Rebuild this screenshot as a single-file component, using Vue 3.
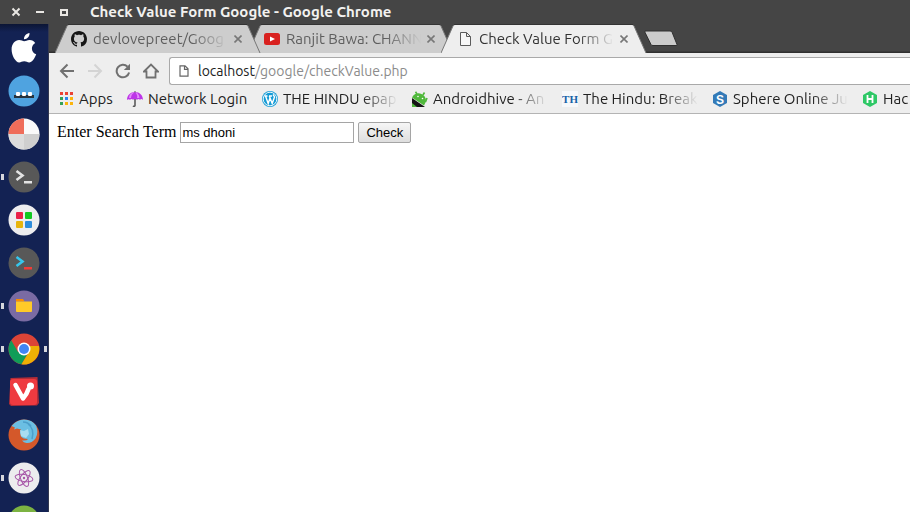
<script setup>
import { ref } from 'vue'

const term = ref('ms dhoni')

const tabs = [
  { id: 'github', title: 'devlovepreet/Goog', active: false },
  { id: 'youtube', title: 'Ranjit Bawa: CHANN', active: false },
  { id: 'document', title: 'Check Value Form G', active: true },
]

const bookmarks = [
  { id: 'apps', title: 'Apps', size: 'short' },
  { id: 'umbrella', title: 'Network Login', size: 'medium' },
  { id: 'wordpress', title: 'THE HINDU epap', size: 'full' },
  { id: 'android', title: 'Androidhive - An', size: 'full' },
  { id: 'hindu', title: 'The Hindu: Break', size: 'full' },
  { id: 'sphere', title: 'Sphere Online Ju', size: 'full' },
  { id: 'hacker', title: 'Hac', size: 'full' },
]

const dock = [
  { id: 'apple', label: 'Launcher' },
  { id: 'dots', label: 'Dock settings' },
  { id: 'pie', label: 'Workspaces' },
  { id: 'terminal', label: 'Terminal', running: true },
  { id: 'squares', label: 'Software' },
  { id: 'terminator', label: 'Terminator' },
  { id: 'files', label: 'Files', running: true },
  { id: 'chrome', label: 'Chrome', running: true, focused: true },
  { id: 'vivaldi', label: 'Vivaldi' },
  { id: 'firefox', label: 'Firefox' },
  { id: 'atom', label: 'Atom', running: true },
  { id: 'green', label: 'Android Studio' },
]
</script>

<template>
  <div class="desktop">
    <header class="titlebar">
      <div class="window-buttons">
        <button type="button" aria-label="Close window">
          <svg width="10" height="10" viewBox="0 0 10 10"><path d="M1.5 1.500l7 7M8.500 1.500l-7 7" stroke="#e9e7e3" stroke-width="2" /></svg>
        </button>
        <button type="button" aria-label="Minimize window">
          <svg width="10" height="10" viewBox="0 0 10 10"><path d="M1 5h8" stroke="#e9e7e3" stroke-width="2" /></svg>
        </button>
        <button type="button" aria-label="Maximize window">
          <svg width="10" height="10" viewBox="0 0 10 10"><path d="M2 3h6v5h-6z" fill="none" stroke="#e9e7e3" stroke-width="2" /></svg>
        </button>
      </div>
      <h1>Check Value Form Google - Google Chrome</h1>
    </header>

    <div class="workspace">
      <nav class="dock" aria-label="Launcher">
        <button v-for="app in dock" :key="app.id" type="button" class="launcher" :aria-label="app.label">
          <span class="pip" :class="{ on: app.running }"></span>
          <svg width="32" height="32" viewBox="0 0 32 32">
            <g v-if="app.id === 'apple'" fill="#fff">
              <path d="M21.500 1c.3 3.300-2.300 6.300-5.500 6.200C15.700 4.200 18.500 1.300 21.500 1z" />
              <path d="M16.200 9.200c1.500 0 3.100-1.400 5.500-1.300 2.300.1 4.300 1.100 5.500 3-4.900 3.100-4.100 9.200 1 11.400-1.500 4.200-4.300 8.200-7 8.200-1.900 0-2.700-1.200-5-1.200s-3.200 1.200-5 1.200C7.500 30.400 3.600 23.300 3.600 17.500c0-6 3.700-9.400 7.500-9.500 2.100 0 3.700 1.200 5.100 1.200z" />
            </g>
            <g v-else-if="app.id === 'dots'">
              <circle cx="16" cy="16" r="15.500" fill="#4fa3e0" />
              <rect x="6" y="20" width="20" height="3" fill="#26333e" />
              <g fill="#fff"><rect x="8" y="17" width="4" height="4" rx="1" /><rect x="14" y="17" width="4" height="4" rx="1" /><rect x="20" y="17" width="4" height="4" rx="1" /></g>
            </g>
            <g v-else-if="app.id === 'pie'">
              <circle cx="16" cy="16" r="15.500" fill="#fafafa" />
              <path d="M16 16V.5A15.500 15.500 0 0 0 .5 16z" fill="#ef6d5a" />
              <path d="M16 16H.5A15.500 15.500 0 0 0 16 31.500z" fill="#dcdcdc" />
              <path d="M16 16V31.500A15.500 15.500 0 0 0 31.500 16z" fill="#cfcfcf" />
            </g>
            <g v-else-if="app.id === 'terminal'">
              <circle cx="16" cy="16" r="15.500" fill="#585858" />
              <path d="M8.500 10l6 4.500-6 4.500" fill="none" stroke="#e3e3e3" stroke-width="2.600" />
              <rect x="16" y="20" width="8" height="2.500" fill="#e3e3e3" />
            </g>
            <g v-else-if="app.id === 'squares'">
              <circle cx="16" cy="16" r="15.500" fill="#ededef" />
              <rect x="8" y="8" width="7" height="7" rx="1" fill="#ea2149" /><rect x="17" y="8" width="7" height="7" rx="1" fill="#12c821" />
              <rect x="8" y="17" width="7" height="7" rx="1" fill="#e8b50c" /><rect x="17" y="17" width="7" height="7" rx="1" fill="#2e8ddc" />
            </g>
            <g v-else-if="app.id === 'terminator'">
              <circle cx="16" cy="16" r="15.500" fill="#585858" />
              <path d="M8.500 10l6 4.500-6 4.500" fill="none" stroke="#35c6ec" stroke-width="2.600" />
              <rect x="16" y="20" width="8" height="2.500" fill="#f23c37" />
            </g>
            <g v-else-if="app.id === 'files'">
              <circle cx="16" cy="16" r="15.500" fill="#7a6ba3" />
              <path d="M8 9h7l1.500 2.500H8z" fill="#fb8c00" />
              <path d="M8 11.500h16v9.500q0 1-1 1H9q-1 0-1-1z" fill="#ffca28" />
            </g>
            <g v-else-if="app.id === 'chrome'">
              <circle cx="16" cy="16" r="15.500" fill="#dc4437" />
              <path d="M3.200 7.200A15.500 15.500 0 0 0 13.500 31.300L20 20 10 19z" fill="#109d58" />
              <path d="M31 13a15.500 15.500 0 0 1-17.500 18.300L21 19l1-6z" fill="#eeb004" />
              <circle cx="16" cy="16" r="6.500" fill="#fff" /><circle cx="16" cy="16" r="5" fill="#4285f4" />
            </g>
            <g v-else-if="app.id === 'vivaldi'">
              <path d="M2.500 2l27-1 1.500 26-2 2.500-26 .5L1 28z" fill="#b32d37" />
              <rect x="2" y="3" width="27" height="26" rx="3" fill="#ee3a40" />
              <path d="M7.500 9l7.500 13.500q4-4.500 5.500-9.500" fill="none" stroke="#fff" stroke-width="4.500" stroke-linecap="round" stroke-linejoin="round" />
              <circle cx="22.500" cy="10" r="3.500" fill="#fff" />
            </g>
            <g v-else-if="app.id === 'firefox'">
              <circle cx="16" cy="16" r="15.500" fill="#d4582a" />
              <path d="M3.500 7Q9 .5 16 .5q8 0 12 6 3 7-.5 13-4 5-9 4.500-3-.5-4.500-2.500 5 .5 6-1.500-5 0-7-2.500l-1-4 1-3-4-1-3 1 1-2z" fill="#6bbfe3" />
              <path d="M20 5q7 5 4 15M15 3q5 0 8 4" fill="none" stroke="#4c9fcb" stroke-width="1.500" />
              <path d="M12 11l4 1 4-2 1 5-3 4-5-2z" fill="#a9dcf0" />
            </g>
            <g v-else-if="app.id === 'atom'">
              <circle cx="16" cy="16" r="15.500" fill="#ececee" />
              <g fill="none" stroke="#a756a8" stroke-width="1">
                <ellipse cx="16" cy="16" rx="9" ry="3.500" transform="rotate(10 16 16)" />
                <ellipse cx="16" cy="16" rx="9" ry="3.500" transform="rotate(68 16 16)" />
                <ellipse cx="16" cy="16" rx="9" ry="3.500" transform="rotate(128 16 16)" />
              </g>
              <circle cx="16" cy="16" r="1.200" fill="#a756a8" />
            </g>
            <circle v-else cx="16" cy="16" r="15.500" fill="#7cb342" />
          </svg>
          <span class="pip" :class="{ on: app.focused }"></span>
        </button>
      </nav>

      <div class="browser">
        <div class="tabstrip">
          <div v-for="tab in tabs" :key="tab.id" class="tab" :class="[tab.id, { active: tab.active }]">
            <svg class="tab-shape" viewBox="0 0 206 29" preserveAspectRatio="none">
              <path class="fill" d="M0 29L12 2q1-1.500 2-1.500H191q1 0 2 1.500L205 29z" />
              <path class="edge" d="M0 29L12 2q1-1.500 2-1.500M191 .5q1 0 2 1.500L205 29" />
              <path class="top" d="M13 .5H192" />
            </svg>
            <svg v-if="tab.id === 'github'" width="16" height="16" viewBox="0 0 16 16"><path fill="#161616" d="M8 0C3.580 0 0 3.580 0 8c0 3.540 2.290 6.530 5.470 7.590.4.070.55-.17.55-.38 0-.19-.01-.82-.01-1.490-2.010.37-2.530-.49-2.690-.94-.09-.23-.48-.94-.82-1.130-.28-.15-.68-.52-.01-.53.63-.01 1.080.58 1.230.82.72 1.210 1.870.87 2.330.66.070-.52.28-.87.51-1.070-1.780-.2-3.640-.89-3.640-3.950 0-.87.31-1.590.82-2.150-.08-.2-.36-1.020.08-2.120 0 0 .67-.21 2.200.82.64-.18 1.320-.27 2-.27s1.360.09 2 .27c1.530-1.040 2.200-.82 2.200-.82.44 1.100.16 1.920.08 2.120.51.56.82 1.270.82 2.150 0 3.070-1.870 3.750-3.650 3.950.29.25.54.73.54 1.480 0 1.070-.01 1.930-.01 2.200 0 .21.15.46.55.38A8.010 8.010 0 0 0 16 8c0-4.420-3.580-8-8-8z" /></svg>
            <svg v-else-if="tab.id === 'youtube'" width="16" height="16" viewBox="0 0 16 16"><rect y="2" width="16" height="12" rx="2.500" fill="#d9211f" /><path d="M6 5.500l5 2.500-5 2.500z" fill="#fff" /></svg>
            <svg v-else width="16" height="16" viewBox="0 0 16 16"><path d="M3.500 1.500h6l4 4v9h-10zM9.500 1.500v4h4" fill="#f8f8f8" stroke="#5c5c5c" /></svg>
            <span class="tab-title">{{ tab.title }}</span>
            <button type="button" class="tab-close" :aria-label="'Close ' + tab.title">
              <svg width="8" height="8" viewBox="0 0 8 8"><path d="M.5.5l7 7M7.500.5l-7 7" stroke="currentColor" stroke-width="1.600" /></svg>
            </button>
          </div>
          <button type="button" class="new-tab" aria-label="New tab">
            <svg width="34" height="17" viewBox="0 0 34 17"><path d="M1 1h25q1.500 0 2 1l5 12.500q.5 1-1 1H9q-1.500 0-2-1L.8 2z" fill="#cbcbcb" stroke="#303030" /></svg>
          </button>
        </div>

        <div class="toolbar">
          <button type="button" aria-label="Back"><svg width="16" height="16" viewBox="0 0 16 16"><path d="M15 8H2M8.500 1.500L2 8l6.500 6.500" fill="none" stroke="#707070" stroke-width="2" /></svg></button>
          <button type="button" aria-label="Forward"><svg width="16" height="16" viewBox="0 0 16 16"><path d="M1 8h13M7.500 1.500L14 8l-6.500 6.500" fill="none" stroke="#d4d4d4" stroke-width="2" /></svg></button>
          <button type="button" aria-label="Reload"><svg width="16" height="16" viewBox="0 0 16 16"><path d="M12.500 3.600A6.300 6.300 0 1 0 14.100 9.500" fill="none" stroke="#707070" stroke-width="2" /><path d="M15 .8V7H8.800z" fill="#707070" /></svg></button>
          <button type="button" aria-label="Home"><svg width="16" height="16" viewBox="0 0 16 16"><path d="M1 8.500L8 1.500l7 7h-2.500v6h-9v-6z" fill="none" stroke="#707070" stroke-width="1.800" /></svg></button>
          <div class="omnibox">
            <svg width="10" height="12" viewBox="0 0 10 12"><path d="M1 .8h5l3 3v7.400H1zM5.500.8v3.500H9" fill="none" stroke="#666" stroke-width="1.200" /></svg>
            <span class="url"><b>localhost</b>/google/checkValue.php</span>
          </div>
        </div>

        <nav class="bookmarks" aria-label="Bookmarks">
          <a v-for="mark in bookmarks" :key="mark.id" href="#" :class="mark.size">
            <svg width="16" height="16" viewBox="0 0 16 16">
              <g v-if="mark.id === 'apps'">
                <path d="M2 1h3v3h-3zM7 1h3v3h-3zM12 1h3v3h-3z" fill="#ea4335" />
                <path d="M2 6h3v3h-3zM2 11h3v3h-3z" fill="#34a056" />
                <path d="M7 6h3v3h-3z" fill="#2a84f0" />
                <path d="M12 6h3v3h-3zM7 11h3v3h-3zM12 11h3v3h-3z" fill="#fbb40b" />
              </g>
              <g v-else-if="mark.id === 'umbrella'">
                <path d="M8 7v7.500q-.5 1.500-2 .5" fill="none" stroke="#5b5b5b" stroke-width="1.600" />
                <path d="M0 9C0 4 3.500 1 8 1s8 3 8 8q-1.500-2-3-.2Q11.500 7 10 8.800 8 7 6 8.800 4.500 7 3 8.800 1.500 7.500 0 9z" fill="#bd35e8" />
                <path d="M4 7q0-4 4-6-6 1-6 6zM10 7q1-3-2-6 4 1 4.500 6z" fill="#e58afa" />
                <path d="M8 0v1.500" stroke="#555" />
              </g>
              <g v-else-if="mark.id === 'wordpress'">
                <circle cx="8" cy="8" r="8" fill="#159bd5" /><circle cx="8" cy="8" r="6.800" fill="none" stroke="#fff" stroke-width=".9" />
                <path d="M2.500 5h3M7 5h3M3.500 5l2.700 7.500L8 7M7.300 5l2.900 7.500L12.500 6q-.8-1.500-1.500-2.500" fill="none" stroke="#fff" stroke-width="1.400" />
              </g>
              <g v-else-if="mark.id === 'android'">
                <path d="M0 7l13 9H0z" fill="#151515" />
                <path d="M0 6.500q3-5 8-4 6 1.500 6 8l-2 4z" fill="#50b83c" />
                <path d="M5 3L3.500.8M11 4l1.500-2.500M15 7l-1.500 4" stroke="#50b83c" stroke-width="1.600" />
                <path d="M0 12l5 4H0z" fill="#50b83c" />
                <circle cx="6" cy="5.500" r=".8" fill="#fff" /><circle cx="10.500" cy="7.500" r=".8" fill="#fff" />
              </g>
              <g v-else-if="mark.id === 'hindu'">
                <rect width="16" height="16" fill="#f7f8fa" />
                <text x="8" y="12" text-anchor="middle" class="hindu-mark">TH</text>
              </g>
              <g v-else-if="mark.id === 'sphere'">
                <path d="M8 0l7 4v8l-7 4-7-4V4z" fill="#337ab7" />
                <text x="8" y="12.500" text-anchor="middle" class="letter-mark">S</text>
              </g>
              <g v-else>
                <path d="M8 0l7 4v8l-7 4-7-4V4z" fill="#2ec866" />
                <path d="M5.500 4v8M10.500 4v8M5.500 8h5" fill="none" stroke="#fff" stroke-width="1.800" />
              </g>
            </svg>
            <span>{{ mark.title }}</span>
          </a>
        </nav>

        <main class="page">
          <form @submit.prevent>
            <label for="term">Enter Search Term</label>
            <input id="term" v-model="term" type="text" />
            <button type="submit">Check</button>
          </form>
        </main>
      </div>
    </div>
  </div>
</template>

<style>
body {
  overflow: hidden;
}
</style>

<style scoped>
.desktop {
  display: flex;
  flex-direction: column;
  height: 100vh;
  font-family: Ubuntu, "Noto Sans", sans-serif;
  color: #333;
  background: #fff;
}
button {
  padding: 0;
  border: 0;
  background: none;
}
svg {
  display: block;
  flex: none;
}
.titlebar {
  display: flex;
  flex: none;
  align-items: center;
  height: 24px;
  padding-left: 11px;
  background: #454545;
}
.window-buttons {
  display: flex;
  gap: 14px;
}
.titlebar h1 {
  margin: 0 0 0 21px;
  font-size: 15px;
  line-height: 24px;
  color: #f2f1ef;
  white-space: nowrap;
}
.workspace {
  display: flex;
  flex: 1;
  min-height: 0;
}
.dock {
  display: flex;
  flex: none;
  flex-direction: column;
  width: 48px;
  padding-top: 2px;
  overflow: hidden;
  background: linear-gradient(#0b1534, #132253 8px);
  border-right: 1px solid #333850;
}
.launcher {
  display: flex;
  flex: none;
  align-items: center;
  justify-content: space-between;
  height: 43px;
  padding: 0 1px;
}
.pip {
  width: 3px;
  height: 6px;
}
.pip.on {
  background: #d5d6dc;
}
.browser {
  display: flex;
  flex: 1;
  flex-direction: column;
  min-width: 0;
}
.tabstrip {
  display: flex;
  flex: none;
  height: 29px;
  padding-left: 6px;
  background: linear-gradient(#454545 27px, #303030 28px);
}
.tab {
  position: relative;
  z-index: 2;
  display: flex;
  flex: 0 1 206px;
  align-items: center;
  min-width: 0;
  margin-right: -13px;
  padding: 0 19px 0 16px;
  box-sizing: border-box;
  color: #5e5e5e;
}
.tab.youtube {
  z-index: 1;
}
.tab.active {
  z-index: 3;
  color: #333;
}
.tab > svg,
.tab-title,
.tab-close {
  z-index: 1;
}
.tab > .tab-shape {
  position: absolute;
  inset: 0;
  z-index: 0;
  width: 100%;
  height: 100%;
}
.fill {
  fill: #cdcdcd;
}
.active .fill {
  fill: #eee;
}
.edge {
  fill: none;
  stroke: #777;
}
.top {
  stroke: #333;
}
.tab-title {
  flex: 1;
  min-width: 0;
  margin: 0 6px;
  overflow: hidden;
  font-size: 15px;
  line-height: 28px;
  white-space: nowrap;
  mask-image: linear-gradient(to right, #000 calc(100% - 36px), transparent);
}
.tab-close {
  color: #777;
}
.new-tab {
  align-self: center;
  margin-left: 10px;
}
.toolbar {
  display: flex;
  flex: none;
  align-items: center;
  gap: 12px;
  height: 32px;
  padding: 4px 0 0 10px;
  box-sizing: border-box;
  background: #eee;
}
.omnibox {
  display: flex;
  flex: 1;
  align-items: center;
  gap: 9px;
  height: 28px;
  margin-left: -2px;
  padding-left: 9px;
  box-sizing: border-box;
  background: #fff;
  border: 1px solid #a9a9a9;
  border-right: 0;
  border-radius: 3px 0 0 3px;
}
.url {
  font-size: 14px;
  color: #8b8b8b;
  white-space: nowrap;
}
.url b {
  font-weight: 400;
  color: #222;
}
.bookmarks {
  display: flex;
  flex: none;
  align-items: center;
  gap: 14px;
  height: 29px;
  padding-left: 9px;
  box-sizing: border-box;
  overflow: hidden;
  background: #eee;
  border-bottom: 1px solid #b4b4b4;
}
.bookmarks a {
  display: flex;
  flex: none;
  align-items: center;
  gap: 5px;
  font-size: 15px;
  line-height: 26px;
  color: #222;
  text-decoration: none;
  white-space: nowrap;
}
.short {
  width: 55px;
}
.medium {
  width: 121px;
}
.full {
  width: 136px;
}
.full span {
  flex: 1;
  overflow: hidden;
  mask-image: linear-gradient(to right, #000 calc(100% - 36px), transparent);
}
.hindu-mark {
  font: bold 11px "Liberation Serif", serif;
  fill: #1762a8;
}
.letter-mark {
  font: bold 12px "Liberation Sans", sans-serif;
  fill: #fff;
}
.page {
  flex: 1;
  padding: 8px;
  background: #fff;
}
.page form {
  display: flex;
  align-items: flex-start;
  gap: 4px;
  font-family: "Liberation Serif", serif;
  font-size: 16px;
  line-height: 20px;
  color: #000;
}
.page input {
  width: 174px;
  height: 21px;
  padding: 1px;
  box-sizing: border-box;
  font: 13px "Liberation Sans", sans-serif;
  color: #000;
  background: #fff;
  border: 1px solid #a5a5a5;
  border-radius: 0;
}
.page form button {
  height: 21px;
  padding: 0 7px;
  box-sizing: border-box;
  font: 13px "Liberation Sans", sans-serif;
  color: #000;
  background: linear-gradient(#f6f6f6, #dedede);
  border: 1px solid #a5a5a5;
  border-radius: 2px;
}
</style>
